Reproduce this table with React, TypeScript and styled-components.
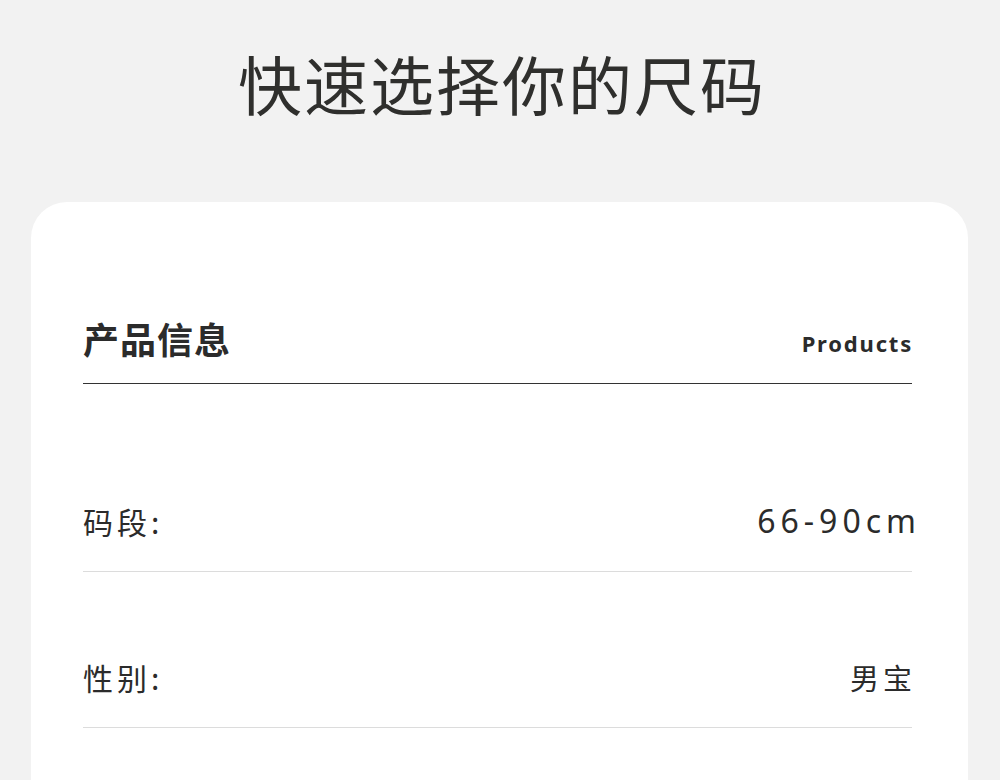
import React from 'react';
import styled, { createGlobalStyle } from 'styled-components';

const GlobalStyle = createGlobalStyle`
  html, body { margin: 0; padding: 0; background: #f2f2f2; overflow: hidden; }
  body { font-family: "Noto Sans", "Noto Sans CJK SC", sans-serif; color: #2f2f2f; }
`;

interface SpecRow {
  label: string;
  value: string;
  latin?: boolean;
}

const rows: SpecRow[] = [
  { label: '码段:', value: '66-90cm', latin: true },
  { label: '性别:', value: '男宝' },
];

const Page = styled.div`
  width: 1000px;
  height: 780px;
  overflow: hidden;
`;

const Title = styled.h1`
  margin: 0;
  padding-top: 50px;
  text-align: center;
  font-family: "Noto Sans CJK SC", sans-serif;
  font-size: 64px;
  line-height: 64px;
  font-weight: 400;
  letter-spacing: 2px;
  padding-left: 4px;
  color: #2f2f2d;
`;

const Card = styled.section`
  margin: 88px 32px 0 31px;
  padding: 118px 56px 200px 52px;
  background: #fff;
  border-radius: 36px;
`;

const Header = styled.div`
  display: flex;
  justify-content: space-between;
  align-items: flex-end;
  padding-bottom: 27px;
  border-bottom: 1px solid #333;
`;

const HeaderTitle = styled.h2`
  margin: 0;
  font-family: "Noto Sans CJK SC", sans-serif;
  font-size: 36px;
  line-height: 36px;
  font-weight: 700;
  letter-spacing: 1px;
  color: #2b2b2b;
`;

const HeaderSub = styled.span`
  font-family: "Noto Sans", sans-serif;
  font-size: 22px;
  line-height: 22px;
  font-weight: 700;
  letter-spacing: 1.8px;
  margin-right: -1px;
  margin-bottom: 2px;
  color: #2b2b2b;
`;

const Row = styled.div<{ $first?: boolean }>`
  display: flex;
  justify-content: space-between;
  align-items: center;
  margin-top: ${p => (p.$first ? '32px' : '0')};
  padding: 87px 0 32px;
  border-bottom: 1px solid #dcdcdc;
`;

const Label = styled.span`
  font-family: "Noto Sans CJK SC", sans-serif;
  font-size: 30px;
  line-height: 36px;
  letter-spacing: 4px;
  color: #2b2b2b;
`;

const Value = styled.span<{ $latin?: boolean }>`
  font-family: ${p => (p.$latin ? '"Noto Sans", sans-serif' : '"Noto Sans CJK SC", sans-serif')};
  font-size: ${p => (p.$latin ? '32px' : '29px')};
  line-height: 36px;
  letter-spacing: ${p => (p.$latin ? '5px' : '4px')};
  margin-right: ${p => (p.$latin ? '-9px' : '-4px')};
  color: #2b2b2b;
`;

export default function App() {
  return (
    <Page>
      <GlobalStyle />
      <Title>快速选择你的尺码</Title>
      <Card>
        <Header>
          <HeaderTitle>产品信息</HeaderTitle>
          <HeaderSub>Products</HeaderSub>
        </Header>
        {rows.map((r, i) => (
          <Row key={r.label} $first={i === 0}>
            <Label>{r.label}</Label>
            <Value $latin={r.latin}>{r.value}</Value>
          </Row>
        ))}
      </Card>
    </Page>
  );
}
